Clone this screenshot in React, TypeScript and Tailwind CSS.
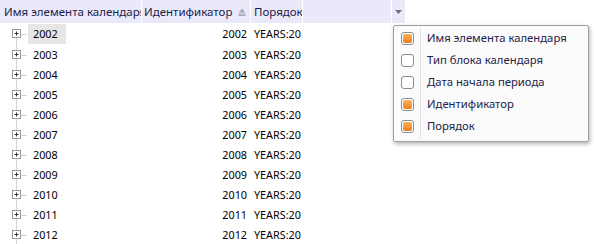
import React from 'react';

const years = ['2002', '2003', '2004', '2005', '2006', '2007', '2008', '2009', '2010', '2011', '2012'];

const menuItems = [
  { label: 'Имя элемента календаря', checked: true },
  { label: 'Тип блока календаря', checked: false },
  { label: 'Дата начала периода', checked: false },
  { label: 'Идентификатор', checked: true },
  { label: 'Порядок', checked: true },
];

function Expander({ first, h }: { first: boolean; h: number }) {
  const mid = h / 2;
  return (
    <svg width="28" height={h} viewBox={`0 0 28 ${h}`} className="shrink-0">
      <line x1="16.5" y1={first ? mid : 0} x2="16.5" y2={h} stroke="#d4d4d4" />
      <line x1="21" y1={mid + 0.5} x2="27" y2={mid + 0.5} stroke="#d4d4d4" />
      <rect x="12.5" y={mid - 4.5} width="8" height="8" fill="#fff" stroke="#9a9a9a" />
      <line x1="14.5" y1={mid - 0.5} x2="18.5" y2={mid - 0.5} stroke="#333" />
      <line x1="16.5" y1={mid - 2.5} x2="16.5" y2={mid + 1.5} stroke="#333" />
    </svg>
  );
}

function Check({ checked }: { checked: boolean }) {
  return (
    <div className="w-[13px] h-[13px] rounded-[3px] border border-[#8c8c8c] bg-white p-px">
      {checked && (
        <div className="w-full h-full rounded-[2px] bg-gradient-to-b from-[#fbb45a] to-[#f07a1c]" />
      )}
    </div>
  );
}

export default function App() {
  return (
    <div
      className="relative w-[594px] h-[244px] bg-white overflow-hidden text-[11.5px]"
      style={{ fontFamily: '"Noto Sans", "Open Sans", sans-serif' }}
    >
      <div className="w-[405px]">
        <div className="flex h-[23px] bg-[#e9e9fa] text-[#1c1c4c] leading-[23px]">
          <div className="w-[142px] pl-1 whitespace-nowrap overflow-hidden border-r border-white">
            Имя элемента календаря
          </div>
          <div className="w-[109px] pl-[2px] flex items-center justify-between pr-[4px] border-r border-white whitespace-nowrap">
            <span>Идентификатор</span>
            <svg width="8" height="8" viewBox="0 0 8 8">
              <path d="M4 0.5 L7 4.5 H1 Z" fill="#a4a4b4" />
              <rect x="0.5" y="5.5" width="7" height="1" fill="#a4a4b4" />
              <rect x="0.5" y="7" width="7" height="1" fill="#a4a4b4" />
            </svg>
          </div>
          <div className="w-[52px] pl-[3px] border-r border-white whitespace-nowrap overflow-hidden">
            Порядок
          </div>
          <div className="w-[89px] border-r border-white" />
          <div className="w-[13px] flex items-center justify-center">
            <svg width="7" height="4" viewBox="0 0 7 4">
              <path d="M0 0 H7 L3.5 4 Z" fill="#707080" />
            </svg>
          </div>
        </div>
        {years.map((y, i) => {
          const h = i === 0 ? 22 : 20;
          return (
            <div key={y} className={`flex items-center text-black text-[10.8px] ${i === 0 ? 'h-[22px]' : 'h-[20px]'}`}>
              <div className="w-[142px] flex items-center">
                <Expander first={i === 0} h={h} />
                <span className={`pl-[5px] leading-[20px] ${i === 0 ? 'bg-[#e6e6e6] pr-[8px]' : ''}`}>{y}</span>
              </div>
              <div className="w-[109px] text-right pr-[4px]">{y}</div>
              <div className="w-[52px] pl-[3px] whitespace-nowrap overflow-hidden">YEARS:20</div>
            </div>
          );
        })}
      </div>

      <div className="absolute left-[393px] top-[25px] w-[196px] bg-[#fbfbfb] border border-[#a0a0a0] rounded-[2px] shadow-[1px_2px_4px_rgba(0,0,0,0.3)] pt-px pb-[4px] text-[11.3px]">
        <div className="absolute left-[26px] top-[2px] bottom-[2px] w-px bg-[#e2e2e2]" />
        {menuItems.map((m) => (
          <div key={m.label} className="flex items-center h-[22px]">
            <div className="w-[27px] flex justify-center">
              <Check checked={m.checked} />
            </div>
            <span className="pl-[6px] text-[#22224a] whitespace-nowrap">{m.label}</span>
          </div>
        ))}
      </div>
    </div>
  );
}
